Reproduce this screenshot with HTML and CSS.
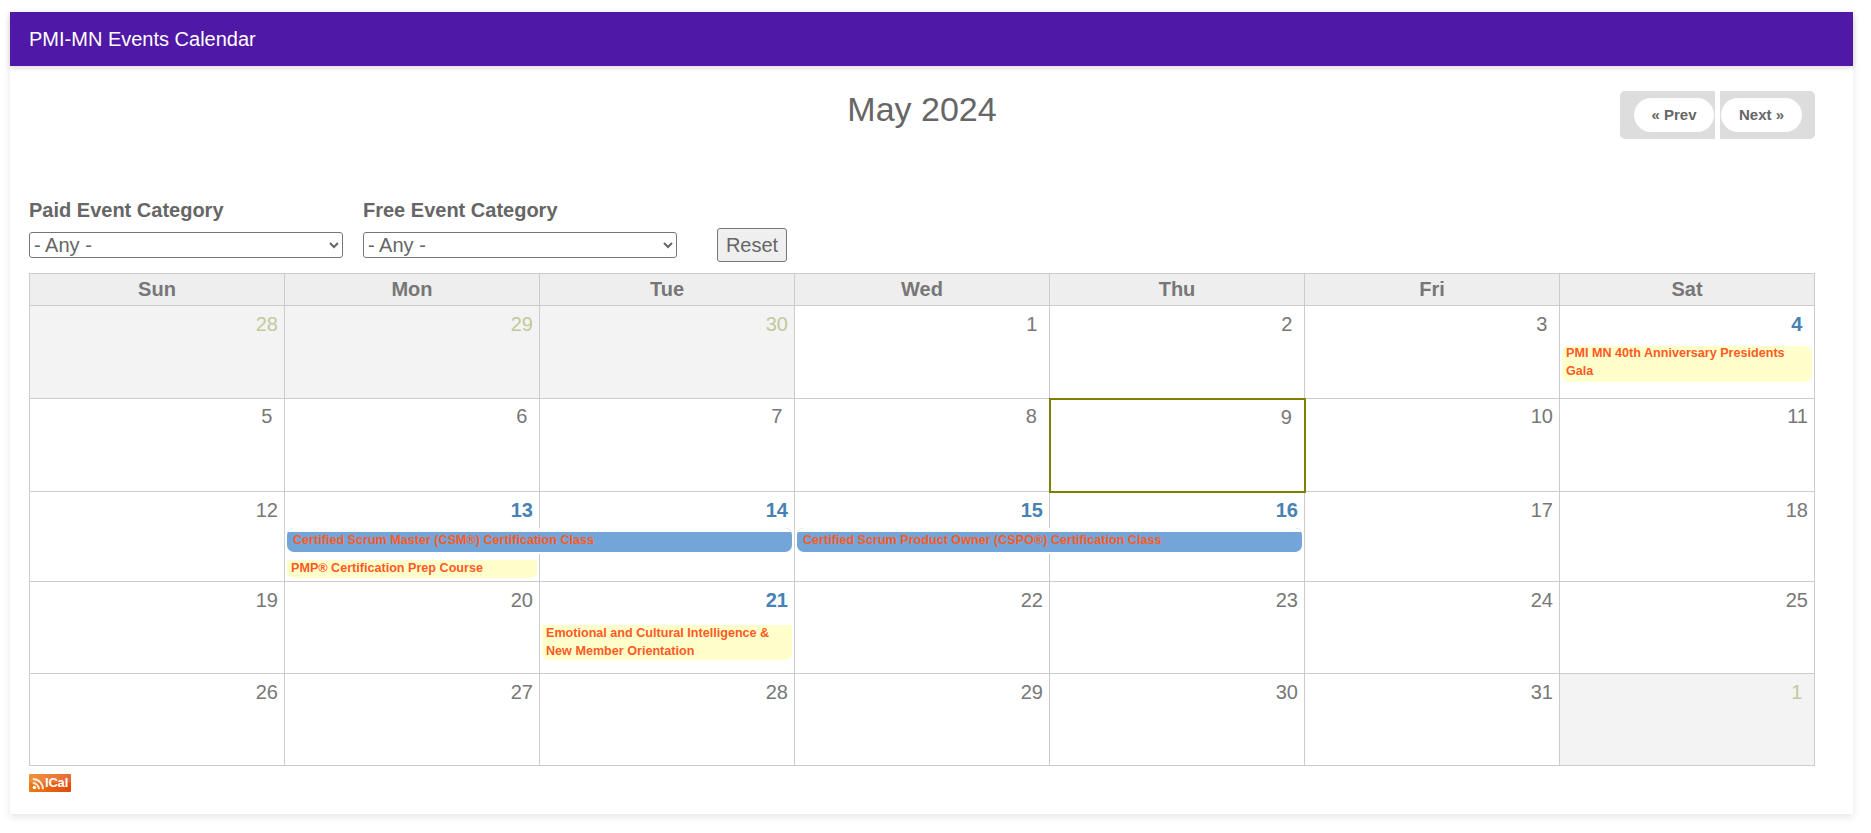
FILE: index.html
```html
<!DOCTYPE html>
<html lang="en">
<head>
<meta charset="utf-8">
<title>PMI-MN Events Calendar</title>
<link rel="stylesheet" href="styles.css">
</head>
<body>
<main class="card">
  <header class="card-header">PMI-MN Events Calendar</header>
  <div class="card-body">
    <div class="title-row">
      <div class="title-spacer"></div>
      <h1 class="month-title">May 2024</h1>
      <ul class="pager">
        <li class="pager-item pager-prev"><a class="pager-link" href="#">« Prev</a></li>
        <li class="pager-item pager-next"><a class="pager-link" href="#">Next »</a></li>
      </ul>
    </div>
    <form class="filters">
      <div class="filter">
        <label class="filter-label" for="paid">Paid Event Category</label>
        <select class="filter-select" id="paid"><option>- Any -</option></select>
      </div>
      <div class="filter">
        <label class="filter-label" for="free">Free Event Category</label>
        <select class="filter-select" id="free"><option>- Any -</option></select>
      </div>
      <button class="reset" type="button">Reset</button>
    </form>
    <table class="calendar">
      <thead>
        <tr><th>Sun</th><th>Mon</th><th>Tue</th><th>Wed</th><th>Thu</th><th>Fri</th><th>Sat</th></tr>
      </thead>
      <tbody>
        <tr class="date-row">
          <td class="other">28</td><td class="other">29</td><td class="other">30</td><td>1&nbsp;</td><td>2&nbsp;</td><td>3&nbsp;</td><td class="has-event">4&nbsp;</td>
        </tr>
        <tr class="event-row week-one">
          <td class="other"></td><td class="other"></td><td class="other"></td><td></td><td></td><td></td>
          <td><div class="event single gala"><span class="gala-text">PMI MN 40th Anniversary Presidents Gala</span></div></td>
        </tr>
        <tr class="date-row date-row-today">
          <td>5&nbsp;</td><td>6&nbsp;</td><td>7&nbsp;</td><td>8&nbsp;</td><td class="today">9&nbsp;</td><td>10</td><td>11</td>
        </tr>
        <tr class="event-row week-two">
          <td></td><td></td><td></td><td></td><td class="today"></td><td></td><td></td>
        </tr>
        <tr class="date-row">
          <td>12</td><td class="has-event">13</td><td class="has-event">14</td><td class="has-event">15</td><td class="has-event below-today">16</td><td>17</td><td>18</td>
        </tr>
        <tr class="span-row">
          <td></td>
          <td colspan="2"><div class="event multi capped">Certified Scrum Master (CSM®) Certification Class</div></td>
          <td colspan="2"><div class="event multi capped">Certified Scrum Product Owner (CSPO®) Certification Class</div></td>
          <td></td><td></td>
        </tr>
        <tr class="event-row week-three">
          <td></td>
          <td><div class="event single capped">PMP® Certification Prep Course</div></td>
          <td></td><td></td><td></td><td></td><td></td>
        </tr>
        <tr class="date-row">
          <td>19</td><td>20</td><td class="has-event">21</td><td>22</td><td>23</td><td>24</td><td>25</td>
        </tr>
        <tr class="event-row week-four">
          <td></td><td></td>
          <td><div class="event single capped">Emotional and Cultural Intelligence &amp; New Member Orientation</div></td>
          <td></td><td></td><td></td><td></td>
        </tr>
        <tr class="date-row">
          <td>26</td><td>27</td><td>28</td><td>29</td><td>30</td><td>31</td><td class="other">1&nbsp;</td>
        </tr>
        <tr class="event-row week-five">
          <td></td><td></td><td></td><td></td><td></td><td></td><td class="other"></td>
        </tr>
      </tbody>
    </table>
    <a class="ical" href="#">
      <svg class="ical-icon" viewBox="0 0 16 16" width="13" height="13" aria-hidden="true">
        <circle cx="3" cy="13" r="2.2" fill="#fff"/>
        <path d="M1 7.5a7.5 7.5 0 0 1 7.5 7.5M1 2.5a12.5 12.5 0 0 1 12.5 12.5" fill="none" stroke="#fff" stroke-width="2.4" opacity=".85"/>
      </svg>
      <span class="ical-text">ICal</span>
    </a>
  </div>
</main>
</body>
</html>
```

FILE: styles.css
```css
* { box-sizing: border-box; }

html, body { height: 100%; }

body {
  margin: 0;
  padding: 12px 18px 0 10px;
  background: #fff;
  color: #666;
  font-family: "Liberation Sans", Arial, sans-serif;
  overflow: hidden;
}

.card {
  height: 802px;
  background: #fff;
  box-shadow: 0 3px 8px rgba(0, 0, 0, 0.1);
}

.card-header {
  height: 54px;
  padding-left: 19px;
  background: #4f18a6;
  color: #fff;
  font-size: 20px;
  line-height: 54px;
  box-shadow: 0 2px 5px rgba(0, 0, 0, 0.14);
}

.card-body { padding: 25px 38px 0 19px; }

.title-row {
  display: grid;
  grid-template-columns: 1fr auto 1fr;
  height: 48px;
}

.month-title {
  margin: 0;
  color: #666;
  font-size: 34px;
  font-weight: 400;
  line-height: 36px;
}

.pager {
  display: flex;
  justify-self: end;
  gap: 5px;
  margin: 0;
  padding: 0;
  list-style: none;
}

.pager-item {
  display: flex;
  height: 48px;
  width: 95px;
  padding: 7px 0;
  background: #ddd;
}

.pager-prev { padding-left: 14px; padding-right: 1px; border-radius: 5px 0 0 5px; }
.pager-next { padding-left: 1px; padding-right: 13px; border-radius: 0 5px 5px 0; }

.pager-link {
  flex: 1;
  background: #fff;
  border-radius: 17px;
  color: #666;
  font-size: 15px;
  font-weight: 700;
  line-height: 34px;
  text-align: center;
  text-decoration: none;
}

.filters {
  display: flex;
  align-items: flex-end;
  margin-top: 62px;
}

.filter {
  display: flex;
  flex-direction: column;
  margin-right: 20px;
  margin-bottom: 4px;
}

.filter-label {
  margin-bottom: 11px;
  margin-top: -1px;
  color: #666;
  font-size: 20px;
  font-weight: 700;
  line-height: 21px;
}

.filter-select {
  width: 314px;
  height: 26px;
  padding: 0;
  background: #fff;
  border: 1px solid #767676;
  border-radius: 3px;
  color: #666;
  font-family: inherit;
  font-size: 20px;
}

.reset {
  width: 70px;
  height: 34px;
  margin-left: 20px;
  padding: 0;
  background: #efefef;
  border: 1px solid #767676;
  border-radius: 3px;
  color: #666;
  font-family: inherit;
  font-size: 20px;
}

.calendar {
  width: 1786px;
  margin-top: 11px;
  border-collapse: collapse;
  table-layout: fixed;
}

.calendar th,
.calendar td {
  border: 1px solid #ccc;
  padding: 0;
}

.calendar th {
  height: 32px;
  background: #eee;
  color: #777;
  font-size: 20px;
  font-weight: 700;
  text-align: center;
}

.date-row td {
  height: 36px;
  padding: 5px 6px 0 0;
  border-bottom: none;
  color: #777;
  font-size: 20px;
  line-height: 26px;
  text-align: right;
  vertical-align: top;
}

.date-row-today td { padding-top: 4px; }
.date-row td.below-today { padding-top: 4px; }

.event-row td,
.span-row td {
  border-top: none;
  vertical-align: top;
}

.span-row td { height: 26px; border-bottom: none; }

.event-row.week-three td { border-top: none; height: 28px; }
.event-row.week-one td { height: 57px; }
.event-row.week-two td { height: 57px; }
.event-row.week-four td { height: 56px; }
.event-row.week-five td { height: 56px; }

.calendar td.other { background: #f3f3f3; color: #c2c99b; }
.calendar td.has-event { color: #4682b4; font-weight: 700; }

.calendar td.today { border-left: 2px solid #7f7f00; border-right: 2px solid #7f7f00; }
.date-row td.today { border-top: 2px solid #7f7f00; }
.event-row td.today { border-bottom: 2px solid #7f7f00; }

.event {
  position: relative;
  overflow: hidden;
  margin: 0 2px;
  border-radius: 7px;
  color: #ff5a1f;
  font-size: 12.6px;
  font-weight: 700;
  line-height: 18px;
}

.single { background: #ffc; padding: 0 4px; }
.multi { background: #73a5d8; }

.capped::before {
  content: "";
  position: absolute;
  top: 0;
  left: 0;
  right: 0;
  height: 4px;
  background: #fff;
}

.gala { margin-top: 4px; height: 36px; }
.gala-text { display: block; margin-top: -2px; }

.multi {
  height: 24px;
  margin-top: 0;
  padding: 3px 6px 3px;
}

.event-row.week-three .event { height: 22px; margin-top: 2px; padding-top: 3px; }
.event-row.week-four .event { height: 39px; margin-top: 3px; padding-top: 3px; }

.ical {
  display: inline-flex;
  align-items: center;
  width: 42px;
  height: 18px;
  margin-top: 8px;
  padding-left: 3px;
  background: linear-gradient(rgba(255, 255, 255, 0.16) 45%, transparent 50%), linear-gradient(100deg, #ef7d12, #e04a10);
  border-radius: 1px;
  color: #fff;
  text-decoration: none;
}

.ical-icon { flex: none; }

.ical-text {
  font-size: 13px;
  font-weight: 700;
  line-height: 16px;
  letter-spacing: -0.2px;
}
```
